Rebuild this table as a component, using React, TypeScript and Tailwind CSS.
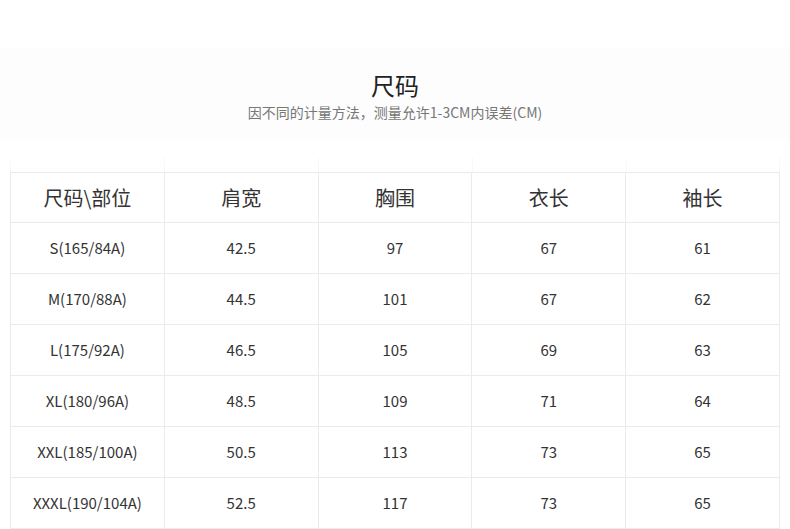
import React from 'react'

const headers = ['尺码\\部位', '肩宽', '胸围', '衣长', '袖长']

const rows = [
  ['S(165/84A)', '42.5', '97', '67', '61'],
  ['M(170/88A)', '44.5', '101', '67', '62'],
  ['L(175/92A)', '46.5', '105', '69', '63'],
  ['XL(180/96A)', '48.5', '109', '71', '64'],
  ['XXL(185/100A)', '50.5', '113', '73', '65'],
  ['XXXL(190/104A)', '52.5', '117', '73', '65'],
]

const font = { fontFamily: '"Noto Sans CJK SC", "Noto Sans", sans-serif' }

const App = () => {
  return (
    <div className="w-[790px] h-[529px] bg-white overflow-hidden text-[#333]" style={font}>
      <div className="h-[48px]" />
      <div className="h-[92px] bg-[#fdfdfd] flex flex-col items-center pt-[21px]">
        <h1 className="text-[24px] leading-[32px] font-normal text-[#222]">尺码</h1>
        <p className="text-[14px] leading-[20px] mt-[1px] text-[#777]">因不同的计量方法，测量允许1-3CM内误差(CM)</p>
      </div>
      <div className="h-[18px]" />
      <div className="mx-[10px] h-[14px] grid grid-cols-5">
        {headers.map((_, i) => (
          <div key={i} className={`h-full border-l border-[#f8f8f8] ${i === 4 ? 'border-r' : ''}`} />
        ))}
      </div>
      <div className="mx-[10px] w-[770px] border-t border-l border-[#ebebeb]">
        <div className="grid grid-cols-5 h-[50px]">
          {headers.map((h) => (
            <div key={h} className="flex items-center justify-center border-r border-b border-[#ebebeb] text-[20px] text-[#333]">
              {h}
            </div>
          ))}
        </div>
        {rows.map((row, r) => (
          <div key={r} className="grid grid-cols-5 h-[51px]">
            {row.map((cell, c) => (
              <div key={c} className="flex items-center justify-center border-r border-b border-[#ebebeb] text-[15px] text-[#333]">
                {cell}
              </div>
            ))}
          </div>
        ))}
      </div>
    </div>
  )
}

export default App
